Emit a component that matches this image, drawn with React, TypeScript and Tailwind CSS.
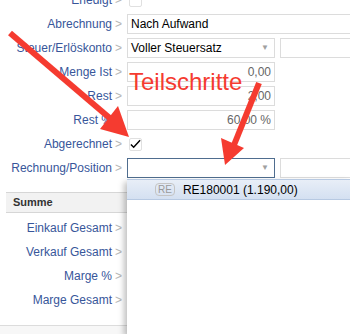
import React from "react"

const Row = ({ label, children }: { label: string; children?: React.ReactNode }) => (
    <div className="flex h-6 items-center">
        <div className="w-[112px] shrink-0 whitespace-nowrap text-right text-[#37569a]">{label}</div>
        <span className="w-[15px] shrink-0 pl-[3px] text-[#b5b5b5]">&gt;</span>
        <div className="flex min-w-0 flex-1 items-center gap-[5px]">{children}</div>
    </div>
)

const Box = ({
    className = "",
    focused,
    children,
}: {
    className?: string
    focused?: boolean
    children?: React.ReactNode
}) => (
    <div
        className={`flex h-[20px] shrink-0 items-center border bg-white px-[3px] ${
            focused ? "border-[#4f6d8f]" : "border-[#dcdcdc]"
        } ${className}`}
    >
        {children}
    </div>
)

const Caret = () => <span className="ml-auto mr-[2px] text-[8px] leading-none text-[#a0a0a0]">▼</span>

const Checkbox = ({ checked }: { checked?: boolean }) => (
    <div className="ml-[2px] flex h-[13px] w-[13px] items-center justify-center rounded-[2px] border border-[#e0e0e0] bg-white">
        {checked && (
            <svg width="12" height="10" viewBox="0 0 12 10">
                <path d="M1 5.5 L4 8.5 L11 1" fill="none" stroke="#000" strokeWidth="1.6" />
            </svg>
        )}
    </div>
)

export default function App() {
    const summen = ["Einkauf Gesamt", "Verkauf Gesamt", "Marge %", "Marge Gesamt"]

    return (
        <div className="relative h-[334px] w-[350px] overflow-hidden bg-white font-['Liberation_Sans',Arial,sans-serif] text-[12px] text-black">
            <div className="-mt-3">
                <Row label="Erledigt">
                    <Checkbox />
                </Row>
                <Row label="Abrechnung">
                    <Box className="w-[240px]">Nach Aufwand</Box>
                </Row>
                <Row label="Steuer/Erlöskonto">
                    <Box className="w-[148px]">
                        Voller Steuersatz
                        <Caret />
                    </Box>
                    <Box className="w-[100px]" />
                </Row>
                <Row label="Menge Ist">
                    <Box className="w-[148px] justify-end text-[#666]">0,00</Box>
                </Row>
                <Row label="Rest">
                    <Box className="w-[148px] justify-end text-[#666]">2,00</Box>
                </Row>
                <Row label="Rest %">
                    <Box className="w-[148px] justify-end text-[#666]">60,00 %</Box>
                </Row>
                <Row label="Abgerechnet">
                    <Checkbox checked />
                </Row>
                <Row label="Rechnung/Position">
                    <Box className="w-[148px]" focused>
                        <Caret />
                    </Box>
                    <Box className="w-[100px]" />
                </Row>
            </div>

            <div className="ml-[6px] mt-[12px] flex h-[21px] items-center border-y border-[#d6d6d6] bg-[#f2f2f2] pl-[7px] text-[11px] font-bold text-[#333]">
                Summe
            </div>
            <div className="mt-[3px]">
                {summen.map((s) => (
                    <Row key={s} label={s} />
                ))}
            </div>
            <div className="mt-[13px] h-[10px] border-t border-[#dcdcdc] bg-[#f7f7f7]" />

            {/* Dropdown */}
            <div className="absolute bottom-0 left-[127px] right-0 top-[179px] bg-white shadow-[-3px_3px_6px_rgba(0,0,0,0.25)]">
                <div className="flex h-[21px] items-center border-y border-[#b7c9e2] bg-gradient-to-b from-[#e8eef7] to-[#d4e0f1] pl-[28px]">
                    <span className="rounded-[4px] border border-[#c4c4c4] px-[2px] text-[10px] leading-[11px] text-[#999]">RE</span>
                    <span className="ml-[8px]">RE180001 (1.190,00)</span>
                </div>
            </div>

            {/* Annotation */}
            <div className="absolute left-[129px] top-[70px] text-[24px] leading-[24px] text-[#f53b30]">Teilschritte</div>
            <svg className="pointer-events-none absolute left-0 top-0" width="350" height="334">
                <line x1="10" y1="33" x2="112" y2="120" stroke="#f53b30" strokeWidth="6" />
                <polygon points="100,129 118,106 129,137" fill="#f53b30" />
                <line x1="259" y1="83" x2="234" y2="145" stroke="#f53b30" strokeWidth="6" />
                <polygon points="221,138 244,148 225,165" fill="#f53b30" />
            </svg>
        </div>
    )
}
